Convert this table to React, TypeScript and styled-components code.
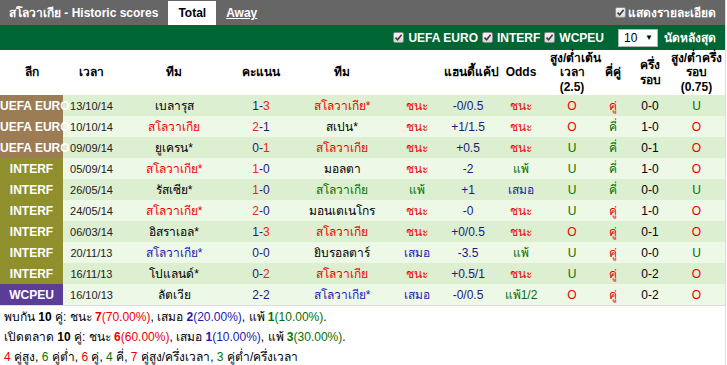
import React from "react";
import styled, { createGlobalStyle } from "styled-components";

const Global = createGlobalStyle`
  html, body { margin: 0; padding: 0; background: #fff; }
  body { font-family: Arial, "Liberation Sans", Tahoma, sans-serif; font-size: 12px; color: #000; }
`;

const Wrap = styled.div`
  width: 726px;
  border-right: 1px solid #ddd;
  box-sizing: border-box;
`;

const TopBar = styled.div`
  height: 25px;
  background: #666;
  display: flex;
  align-items: flex-end;
  padding-left: 9px;
  box-sizing: border-box;
`;

const Title = styled.div`
  color: #fff;
  font-weight: bold;
  font-size: 12px;
  align-self: center;
  margin-right: 10px;
`;

const Tab = styled.div<{ $active?: boolean }>`
  height: 24px;
  display: flex;
  align-items: center;
  padding: 0 10px;
  font-weight: bold;
  font-size: 12px;
  background: ${(p) => (p.$active ? "#fff" : "transparent")};
  color: ${(p) => (p.$active ? "#000" : "#fff")};
  text-decoration: ${(p) => (p.$active ? "none" : "underline")};
`;

const Spacer = styled.div`
  flex: 1;
`;

const DetailToggle = styled.label`
  align-self: center;
  display: flex;
  align-items: center;
  gap: 2px;
  color: #fff;
  font-weight: bold;
  font-size: 12px;
  margin-right: 9px;
`;

const FilterBar = styled.div`
  height: 25px;
  background: #006633;
  display: flex;
  align-items: center;
  justify-content: flex-end;
  padding-right: 9px;
  color: #fff;
  font-weight: bold;
  font-size: 12px;
`;

const Filter = styled.label`
  display: flex;
  align-items: center;
  gap: 4px;
  margin-left: 4px;
`;

const Box = styled.span`
  width: 11px;
  height: 11px;
  box-sizing: border-box;
  border: 1px solid #8a8a8a;
  border-radius: 2px;
  background: linear-gradient(#f4f4f4, #d6d6d6);
  display: inline-flex;
  align-items: center;
  justify-content: center;
`;

const Select = styled.div`
  width: 40px;
  height: 18px;
  box-sizing: border-box;
  background: #fff;
  border: 1px solid #b5b5b5;
  color: #000;
  font-weight: normal;
  font-size: 12px;
  display: flex;
  align-items: center;
  justify-content: space-between;
  padding: 0 4px 0 5px;
  margin-left: 14px;
  margin-right: 6px;
`;

const Arrow = styled.span`
  font-size: 8px;
`;

const Table = styled.table`
  width: 725px;
  border-collapse: collapse;
  table-layout: fixed;
`;

const Th = styled.th`
  height: 45px;
  padding: 0;
  font-weight: bold;
  font-size: 12px;
  line-height: 14.5px;
  text-align: center;
  vertical-align: middle;
  white-space: nowrap;
`;

const Tr = styled.tr<{ $alt: boolean }>`
  height: 21px;
  background: ${(p) => (p.$alt ? "#eef8e7" : "#dcefd1")};
`;

const Td = styled.td<{ $c?: string }>`
  padding: 0;
  text-align: center;
  font-size: 12px;
  white-space: nowrap;
  color: ${(p) => p.$c || "#000"};
`;

const LeagueTd = styled.td<{ $bg: string }>`
  padding: 0;
  text-align: center;
  font-weight: bold;
  font-size: 12px;
  color: #fff;
  background: ${(p) => p.$bg};
  white-space: nowrap;
  overflow: visible;
`;

const DateTd = styled.td`
  padding: 0;
  text-align: center;
  font-size: 11px;
  color: #222;
`;

const Goal = styled.span<{ $win?: boolean }>`
  color: ${(p) => (p.$win ? "#e22" : "#1b1b80")};
`;

const Footer = styled.div`
  border-top: 1px solid #ddd;
  padding: 1px 0 0 4px;
  font-size: 12px;
  line-height: 20px;
`;

const Num = styled.b<{ $c?: string }>`
  color: ${(p) => p.$c || "#000"};
`;

const Pct = styled.span<{ $c: string }>`
  color: ${(p) => p.$c};
`;

const RED = "#e00";
const GREEN = "#087000";
const BLUE = "#1a1ab0";
const NAVY = "#1b1b80";

const leagueColors: Record<string, string> = {
  "UEFA EURO": "#9b7c55",
  INTERF: "#8f8f2e",
  WCPEU: "#5b3d97",
};

const resColor = (r: string) =>
  r.startsWith("ชนะ") ? RED : r.startsWith("แพ้") ? GREEN : BLUE;

type Row = {
  lg: string;
  date: string;
  home: string;
  hc?: string;
  hg: string;
  ag: string;
  win: "h" | "a" | "d";
  away: string;
  ac?: string;
  res: string;
  hcp: string;
  odds: string;
  ou: string;
  oe: string;
  half: string;
  hou: string;
};

const rows: Row[] = [
  { lg: "UEFA EURO", date: "13/10/14", home: "เบลารุส", hg: "1", ag: "3", win: "a", away: "สโลวาเกีย*", ac: RED, res: "ชนะ", hcp: "-0/0.5", odds: "ชนะ", ou: "O", oe: "คู่", half: "0-0", hou: "U" },
  { lg: "UEFA EURO", date: "10/10/14", home: "สโลวาเกีย", hc: RED, hg: "2", ag: "1", win: "h", away: "สเปน*", res: "ชนะ", hcp: "+1/1.5", odds: "ชนะ", ou: "O", oe: "คี่", half: "1-0", hou: "O" },
  { lg: "UEFA EURO", date: "09/09/14", home: "ยูเครน*", hg: "0", ag: "1", win: "a", away: "สโลวาเกีย", ac: RED, res: "ชนะ", hcp: "+0.5", odds: "ชนะ", ou: "U", oe: "คี่", half: "0-1", hou: "O" },
  { lg: "INTERF", date: "05/09/14", home: "สโลวาเกีย*", hc: RED, hg: "1", ag: "0", win: "h", away: "มอลตา", res: "ชนะ", hcp: "-2", odds: "แพ้", ou: "U", oe: "คี่", half: "1-0", hou: "O" },
  { lg: "INTERF", date: "26/05/14", home: "รัสเซีย*", hg: "1", ag: "0", win: "h", away: "สโลวาเกีย", ac: GREEN, res: "แพ้", hcp: "+1", odds: "เสมอ", ou: "U", oe: "คี่", half: "0-0", hou: "U" },
  { lg: "INTERF", date: "24/05/14", home: "สโลวาเกีย*", hc: RED, hg: "2", ag: "0", win: "h", away: "มอนเตเนโกร", res: "ชนะ", hcp: "-0", odds: "ชนะ", ou: "U", oe: "คู่", half: "1-0", hou: "O" },
  { lg: "INTERF", date: "06/03/14", home: "อิสราเอล*", hg: "1", ag: "3", win: "a", away: "สโลวาเกีย", ac: RED, res: "ชนะ", hcp: "+0/0.5", odds: "ชนะ", ou: "O", oe: "คู่", half: "0-1", hou: "O" },
  { lg: "INTERF", date: "20/11/13", home: "สโลวาเกีย*", hc: BLUE, hg: "0", ag: "0", win: "d", away: "ยิบรอลตาร์", res: "เสมอ", hcp: "-3.5", odds: "แพ้", ou: "U", oe: "คู่", half: "0-0", hou: "U" },
  { lg: "INTERF", date: "16/11/13", home: "โปแลนด์*", hg: "0", ag: "2", win: "a", away: "สโลวาเกีย", ac: RED, res: "ชนะ", hcp: "+0.5/1", odds: "ชนะ", ou: "U", oe: "คู่", half: "0-2", hou: "O" },
  { lg: "WCPEU", date: "16/10/13", home: "ลัตเวีย", hg: "2", ag: "2", win: "d", away: "สโลวาเกีย*", ac: BLUE, res: "เสมอ", hcp: "-0/0.5", odds: "แพ้1/2", ou: "O", oe: "คู่", half: "0-2", hou: "O" },
];

const widths = [63, 57, 108, 66, 96, 54, 48, 58, 44, 38, 36, 57];

const Check = () => (
  <Box>
    <svg width="9" height="9" viewBox="0 0 9 9">
      <path d="M1.5 4.6 L3.6 6.8 L7.6 1.8" fill="none" stroke="#3c3c3c" strokeWidth="1.6" />
    </svg>
  </Box>
);

export default function App() {
  return (
    <Wrap>
      <Global />
      <TopBar>
        <Title>สโลวาเกีย - Historic scores</Title>
        <Tab $active>Total</Tab>
        <Tab>Away</Tab>
        <Spacer />
        <DetailToggle>
          <Check />
          แสดงรายละเอียด
        </DetailToggle>
      </TopBar>
      <FilterBar>
        <Filter><Check />UEFA EURO</Filter>
        <Filter><Check />INTERF</Filter>
        <Filter><Check />WCPEU</Filter>
        <Select>
          <span>10</span>
          <Arrow>▼</Arrow>
        </Select>
        นัดหลังสุด
      </FilterBar>
      <Table>
        <colgroup>
          {widths.map((w, i) => (
            <col key={i} style={{ width: w }} />
          ))}
        </colgroup>
        <thead>
          <tr>
            <Th>ลีก</Th>
            <Th>เวลา</Th>
            <Th>ทีม</Th>
            <Th>คะแนน</Th>
            <Th>ทีม</Th>
            <Th></Th>
            <Th>แฮนดี้แค้ป</Th>
            <Th>Odds</Th>
            <Th>สูง/ต่ำเต้น<br />เวลา<br />(2.5)</Th>
            <Th>คี่คู่</Th>
            <Th>ครึ่ง<br />รอบ</Th>
            <Th>สูง/ต่ำครึ่ง<br />รอบ<br />(0.75)</Th>
          </tr>
        </thead>
        <tbody>
          {rows.map((r, i) => (
            <Tr key={i} $alt={i % 2 === 1}>
              <LeagueTd $bg={leagueColors[r.lg]}>{r.lg}</LeagueTd>
              <DateTd>{r.date}</DateTd>
              <Td $c={r.hc}>{r.home}</Td>
              <Td>
                <Goal $win={r.win === "h"}>{r.hg}</Goal>
                <Goal>-</Goal>
                <Goal $win={r.win === "a"}>{r.ag}</Goal>
              </Td>
              <Td $c={r.ac}>{r.away}</Td>
              <Td $c={resColor(r.res)}>{r.res}</Td>
              <Td $c={NAVY}>{r.hcp}</Td>
              <Td $c={resColor(r.odds)}>{r.odds}</Td>
              <Td $c={r.ou === "O" ? RED : GREEN}>{r.ou}</Td>
              <Td $c={r.oe === "คู่" ? RED : GREEN}>{r.oe}</Td>
              <Td>{r.half}</Td>
              <Td $c={r.hou === "O" ? RED : GREEN}>{r.hou}</Td>
            </Tr>
          ))}
        </tbody>
      </Table>
      <Footer>
        <div>
          พบกัน <Num>10</Num> คู่: ชนะ <Num $c={RED}>7</Num><Pct $c={RED}>(70.00%)</Pct>, เสมอ{" "}
          <Num $c={BLUE}>2</Num><Pct $c={BLUE}>(20.00%)</Pct>, แพ้ <Num $c={GREEN}>1</Num>
          <Pct $c={GREEN}>(10.00%)</Pct>.
        </div>
        <div>
          เปิดตลาด <Num>10</Num> คู่: ชนะ <Num $c={RED}>6</Num><Pct $c={RED}>(60.00%)</Pct>, เสมอ{" "}
          <Num $c={BLUE}>1</Num><Pct $c={BLUE}>(10.00%)</Pct>, แพ้ <Num $c={GREEN}>3</Num>
          <Pct $c={GREEN}>(30.00%)</Pct>.
        </div>
        <div>
          <Pct $c={RED}>4</Pct> คู่สูง, <Pct $c={GREEN}>6</Pct> คู่ต่ำ, <Pct $c={RED}>6</Pct> คู่,{" "}
          <Pct $c={GREEN}>4</Pct> คี่, <Pct $c={RED}>7</Pct> คู่สูง/ครึ่งเวลา, <Pct $c={GREEN}>3</Pct>{" "}
          คู่ต่ำ/ครึ่งเวลา
        </div>
      </Footer>
    </Wrap>
  );
}
